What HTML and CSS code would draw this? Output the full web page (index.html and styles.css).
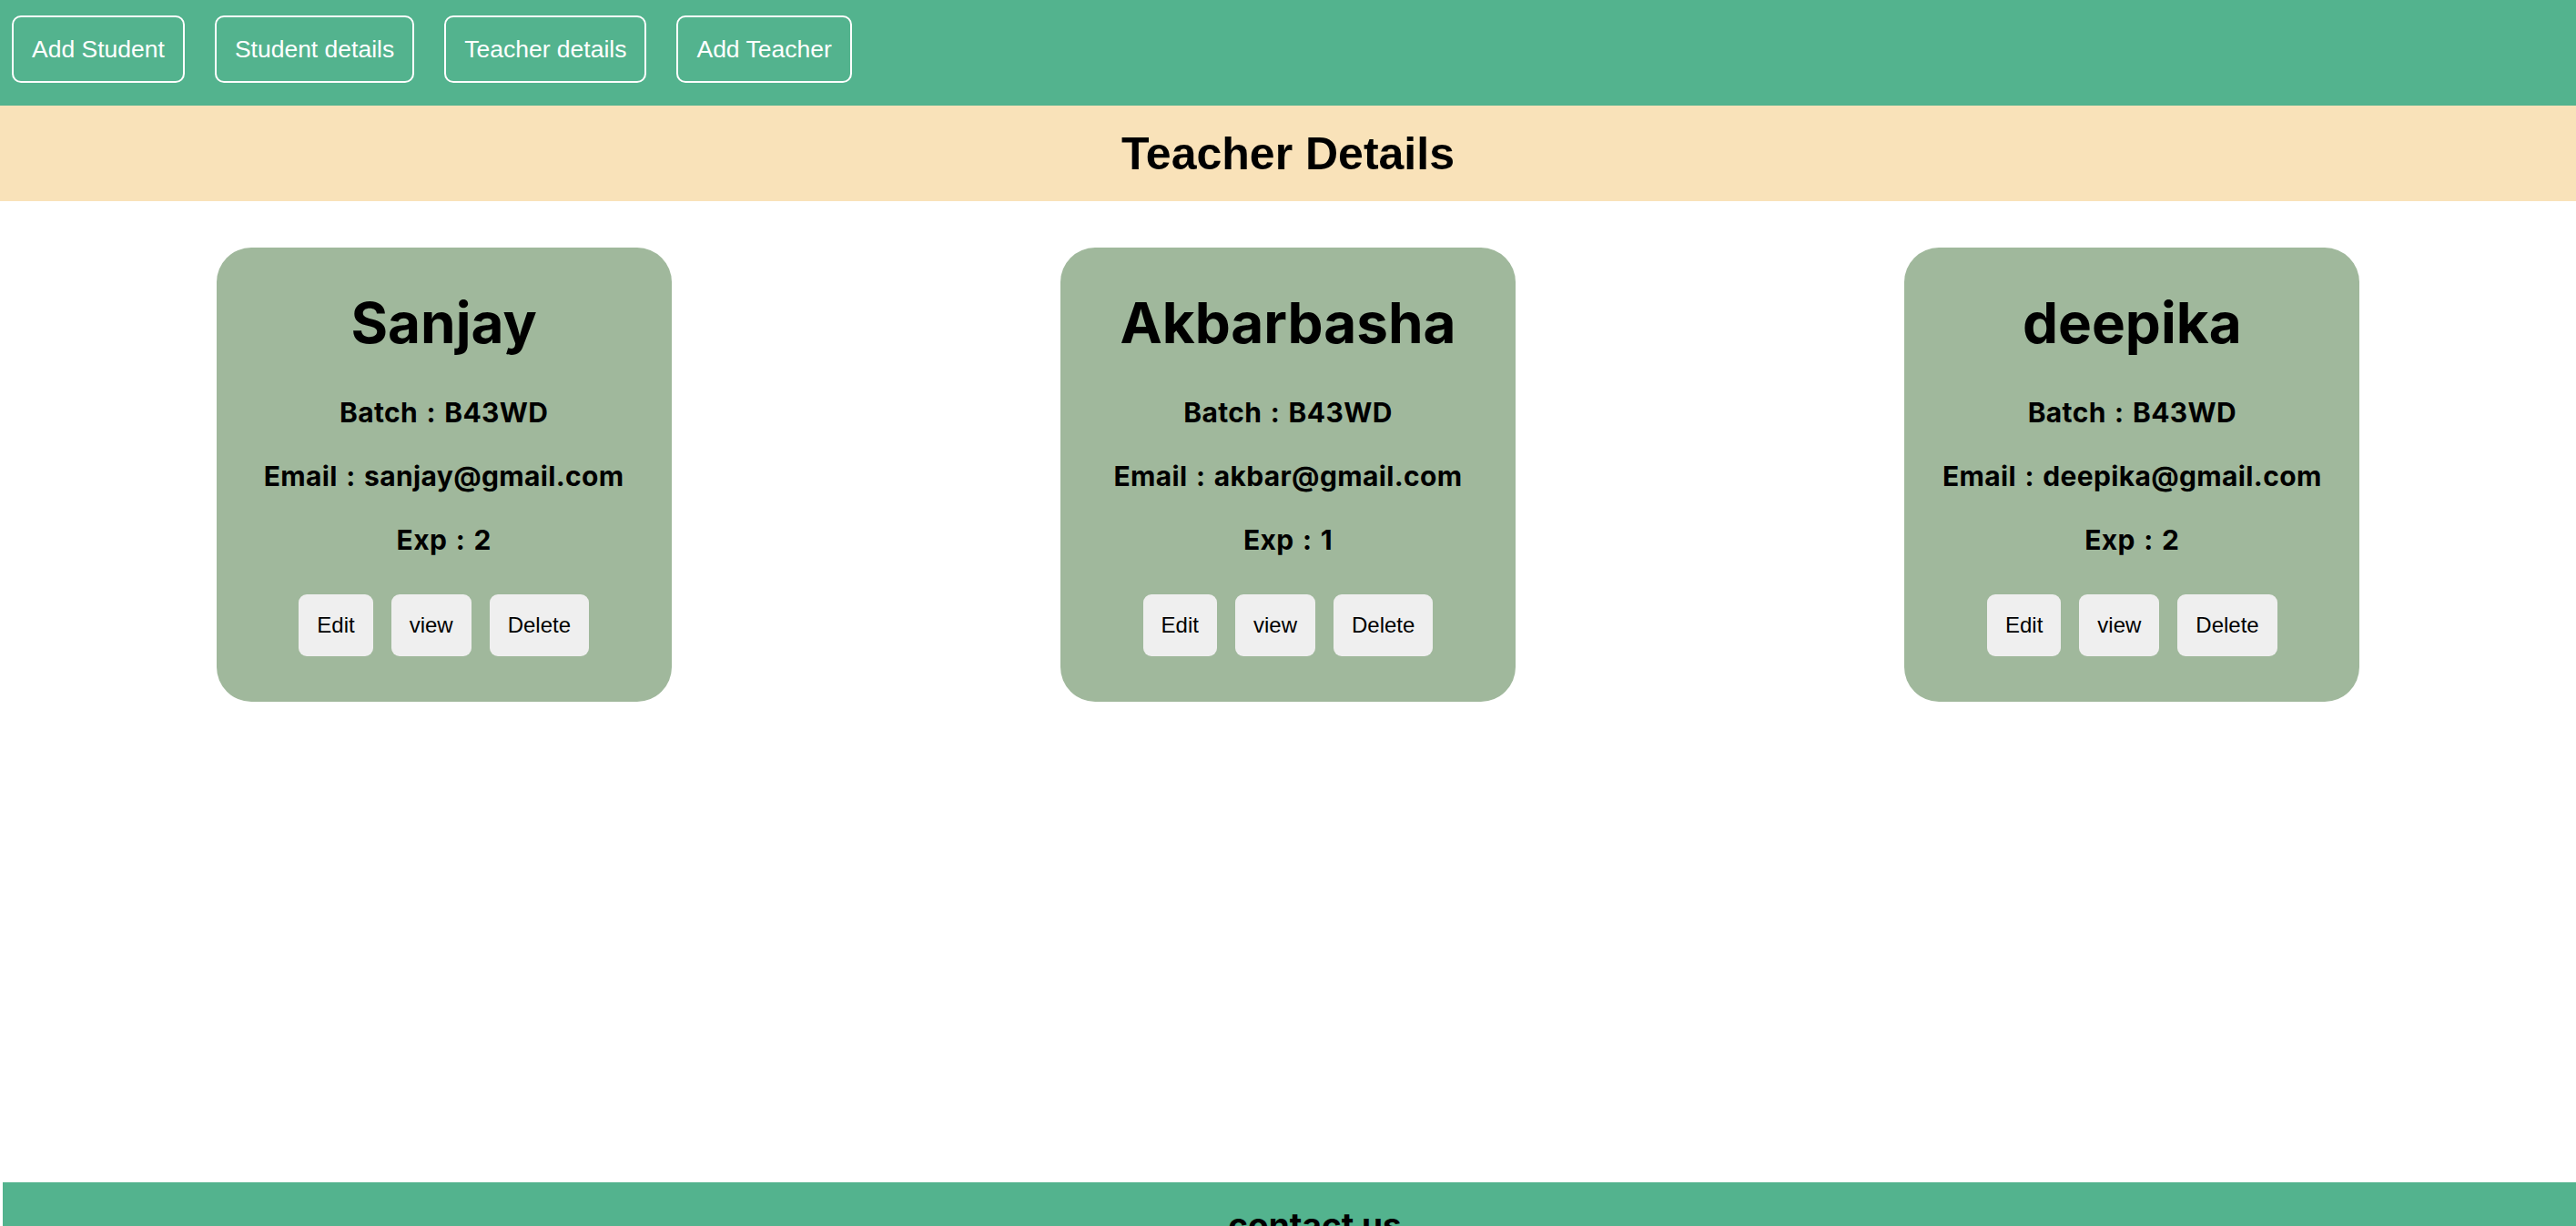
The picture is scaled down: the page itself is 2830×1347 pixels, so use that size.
FILE: index.html
```html
<!DOCTYPE html>
<html lang="en">
<head>
<meta charset="utf-8">
<title>Teacher Details</title>
<link rel="stylesheet" href="styles.css">
</head>
<body>
<nav class="nav">
  <button class="nav-btn">Add Student</button>
  <button class="nav-btn">Student details</button>
  <button class="nav-btn">Teacher details</button>
  <button class="nav-btn">Add Teacher</button>
</nav>
<header class="title-bar">
  <h1 class="title">Teacher Details</h1>
</header>
<main class="cards">
  <div class="cell">
    <div class="card">
      <h2 class="name">Sanjay</h2>
      <p class="info">Batch : B43WD</p>
      <p class="info">Email : sanjay@gmail.com</p>
      <p class="info">Exp : 2</p>
      <div class="actions">
        <button class="act">Edit</button>
        <button class="act">view</button>
        <button class="act">Delete</button>
      </div>
    </div>
  </div>
  <div class="cell">
    <div class="card">
      <h2 class="name">Akbarbasha</h2>
      <p class="info">Batch : B43WD</p>
      <p class="info">Email : akbar@gmail.com</p>
      <p class="info">Exp : 1</p>
      <div class="actions">
        <button class="act">Edit</button>
        <button class="act">view</button>
        <button class="act">Delete</button>
      </div>
    </div>
  </div>
  <div class="cell">
    <div class="card">
      <h2 class="name">deepika</h2>
      <p class="info">Batch : B43WD</p>
      <p class="info">Email : deepika@gmail.com</p>
      <p class="info">Exp : 2</p>
      <div class="actions">
        <button class="act">Edit</button>
        <button class="act">view</button>
        <button class="act">Delete</button>
      </div>
    </div>
  </div>
</main>
<footer class="footer">
  <h2 class="footer-text">contact us</h2>
</footer>
</body>
</html>
```
FILE: styles.css
```css
* { box-sizing: border-box; }
html, body { margin: 0; padding: 0; }
body {
  background: #ffffff;
  font-family: "Liberation Sans", Arial, sans-serif;
  color: #000;
}
.nav {
  background: #53b38e;
  height: 116px;
  display: flex;
  align-items: flex-start;
  gap: 33px;
  padding: 17px 0 0 13px;
}
.nav-btn {
  height: 74px;
  padding: 0 20px;
  background: transparent;
  color: #ffffff;
  border: 2px solid #ffffff;
  border-radius: 10px;
  font-family: "Liberation Sans", Arial, sans-serif;
  font-size: 26.5px;
}
.title-bar {
  background: #f9e2b9;
  height: 105px;
  display: flex;
  align-items: center;
  justify-content: center;
}
.title {
  margin: 0;
  font-size: 50px;
  font-weight: 700;
  line-height: 1;
  font-family: "Liberation Sans", Arial, sans-serif;
}
.cards {
  display: grid;
  grid-template-columns: repeat(3, 1fr);
  padding: 51px 24px 0;
  min-height: 1078px;
  align-content: start;
}
.cell {
  display: flex;
  justify-content: center;
}
.card {
  width: 500px;
  background: #a0b89c;
  border-radius: 38px;
  padding: 45px 0 50px;
  display: flex;
  flex-direction: column;
  align-items: center;
  gap: 35px;
  font-family: Inter, "Noto Sans", sans-serif;
}
.name {
  margin: 0 0 9px;
  font-size: 62px;
  line-height: 75px;
  font-weight: 700;
}
.info {
  margin: 0;
  font-size: 30px;
  line-height: 35px;
  font-weight: 700;
  letter-spacing: 0.35px;
  word-spacing: 2px;
}
.actions {
  margin-top: 7px;
  display: flex;
  gap: 20px;
}
.act {
  height: 68px;
  padding: 0 20px;
  border: none;
  border-radius: 9px;
  background: #efefef;
  color: #000;
  font-family: "Liberation Sans", Arial, sans-serif;
  font-size: 24px;
}
.footer {
  margin-left: 3px;
  background: #53b38e;
  height: 120px;
  padding: 24px 0 0 56px;
  text-align: center;
}
.footer-text {
  margin: 0;
  font-family: Inter, "Noto Sans", sans-serif;
  font-size: 37px;
  line-height: 45px;
  font-weight: 700;
}
```
